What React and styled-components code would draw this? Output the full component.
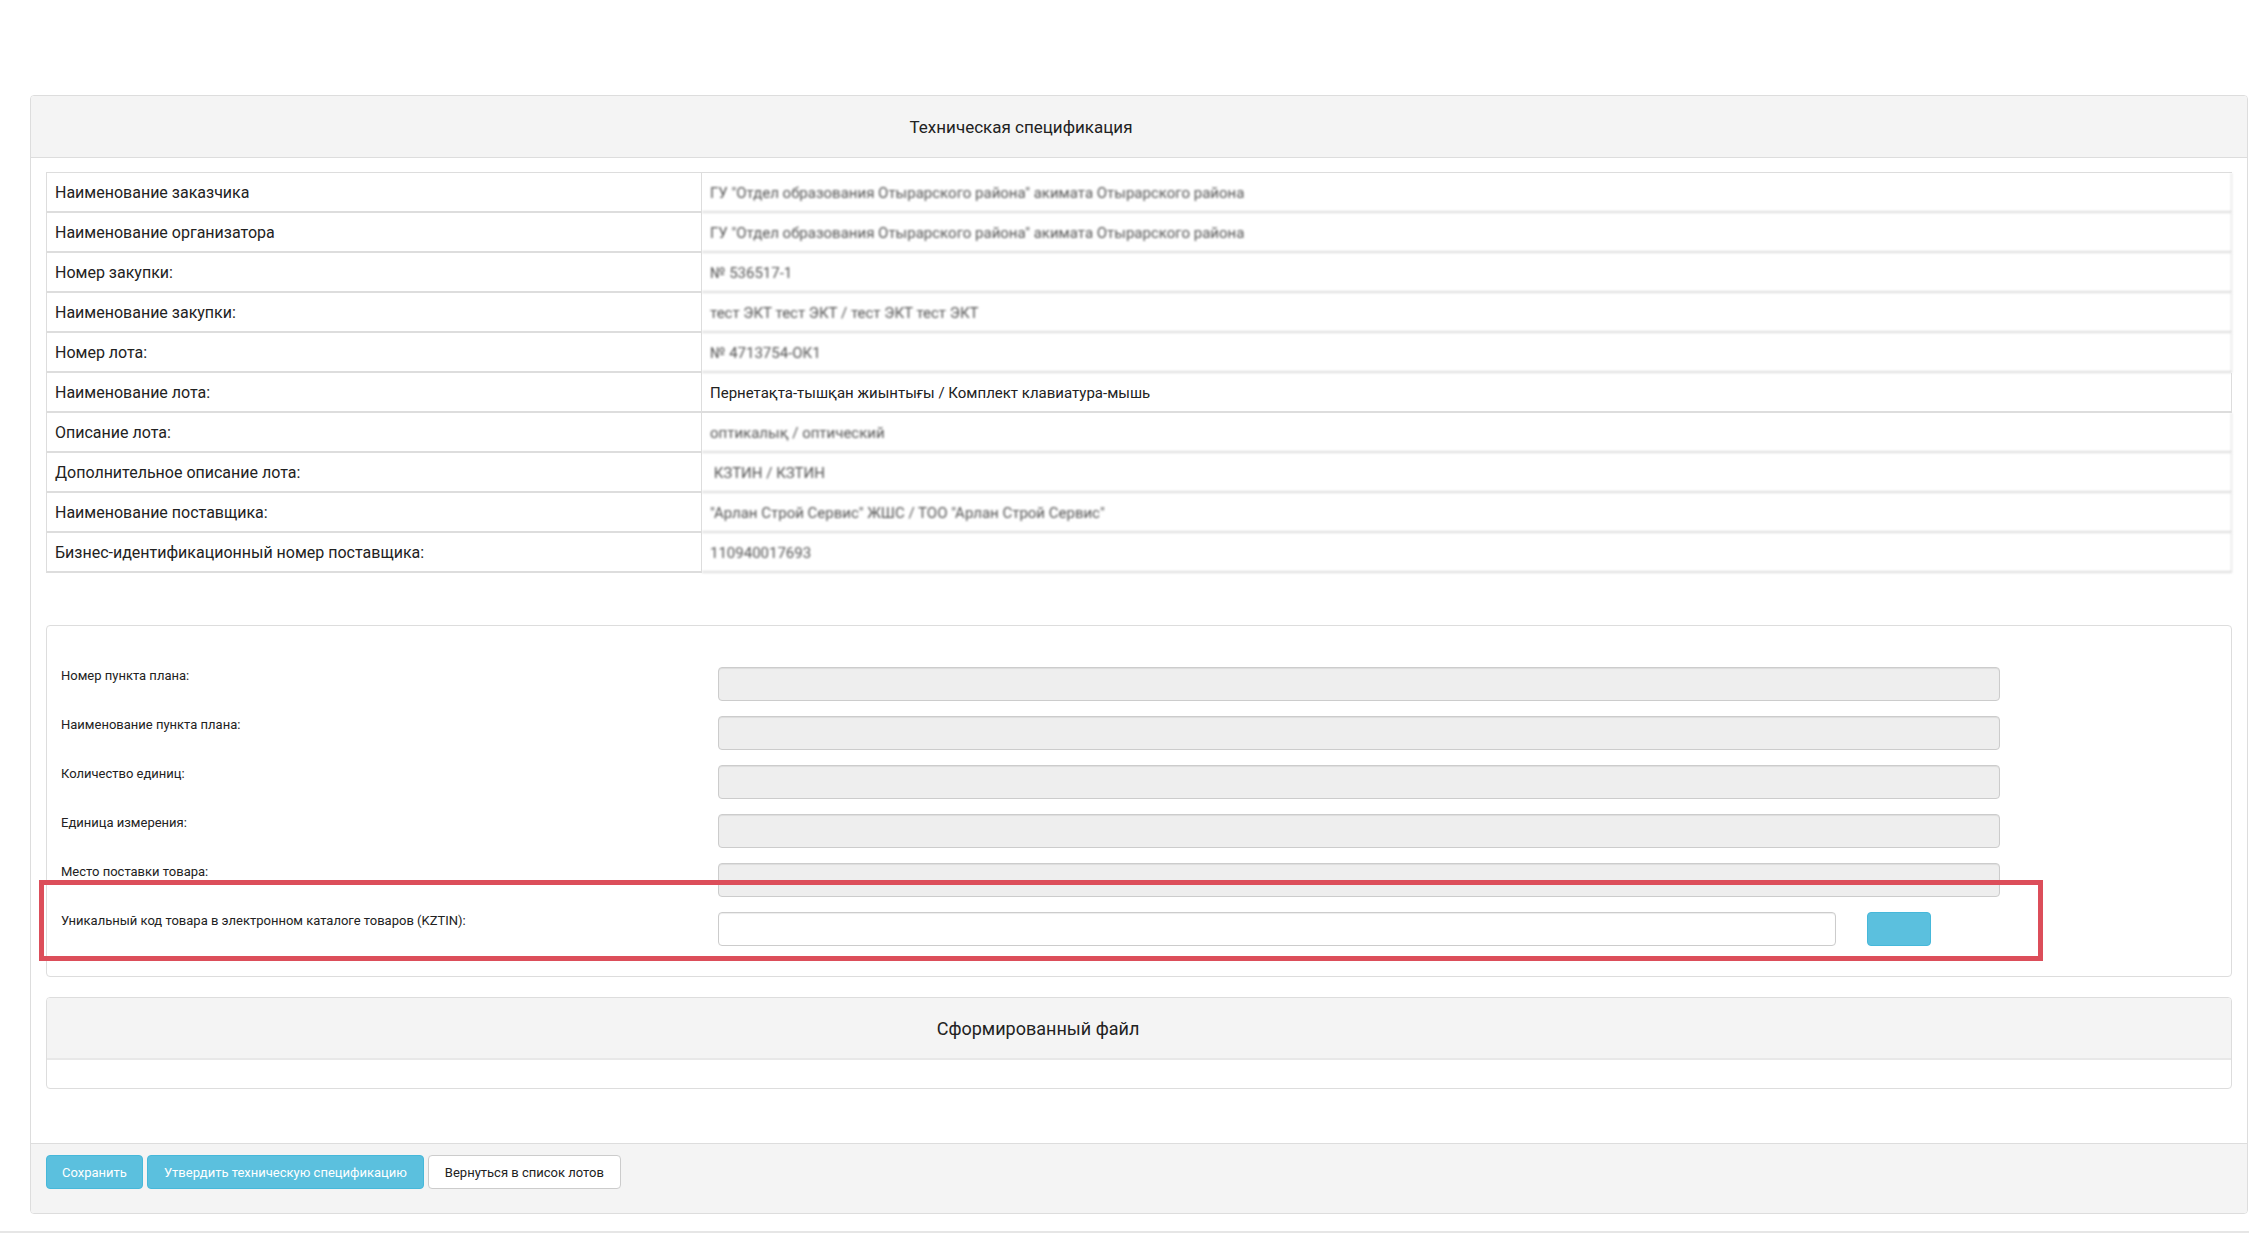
import React from 'react'
import styled, { createGlobalStyle } from 'styled-components'

const GlobalStyle = createGlobalStyle`
    * {
        box-sizing: border-box;
    }

    html, body {
        margin: 0;
        padding: 0;
        background: #fff;
    }

    body {
        font-family: Roboto, "Liberation Sans", Arial, sans-serif;
        color: #333;
    }
`

const Page = styled.div`
    padding: 95px 1px 0 30px;
`

const Panel = styled.section`
    border: 1px solid #ddd;
    border-radius: 4px;
    background: #fff;
`

const PanelHeading = styled.div`
    height: ${props => props.height}px;
    padding-right: ${props => props.shift}px;

    display: flex;
    align-items: center;
    justify-content: center;

    font-size: ${props => props.size}px;
    color: #222;
    background-color: #f4f4f4;
    border-bottom: ${props => props.line}px solid ${props => (props.line > 1 ? '#e8e8e8' : '#ddd')};
    border-radius: 3px 3px 0 0;
`

const PanelBody = styled.div`
    padding: 14px 15px 54px;
`

const InfoTable = styled.table`
    width: 100%;
    table-layout: fixed;
    border-collapse: separate;
    border-spacing: 0;
    border-top: 1px solid #ddd;
    border-left: 1px solid #ddd;

    font-size: 16px;
    line-height: 18px;
`

const Cell = styled.td`
    padding: 11px 8px 9px;
    height: 40px;
    border-right: 1px solid #ddd;
    border-bottom: 2px solid #ddd;
    white-space: pre;
    overflow: hidden;

    font-size: ${props => (props.value ? 15 : 16)}px;
    color: ${props => (props.blurred ? '#555' : '#222')};
    filter: ${props => (props.blurred ? 'blur(0.9px)' : 'none')};
`

const FormPanel = styled.div`
    margin-top: 52px;
    padding: 41px 14px 15px;
    border: 1px solid #ddd;
    border-radius: 4px;
`

const FormRow = styled.div`
    position: relative;
    margin-bottom: 15px;

    display: grid;
    grid-template-columns: 657px 1282px;
    align-items: start;
`

const FormLabel = styled.label`
    font-size: 13px;
    line-height: 18px;
    color: #222;
`

const Field = styled.div`
    height: 34px;
    width: ${props => props.width || '100%'};
    border: 1px solid #ccc;
    border-radius: 4px;
    background-color: ${props => (props.disabled ? '#eee' : '#fff')};
    box-shadow: inset 0 1px 1px rgba(0, 0, 0, 0.075);
`

const FieldGroup = styled.div`
    display: flex;
    align-items: flex-start;
    gap: 31px;
`

const SearchButton = styled.button`
    width: 64px;
    height: 34px;
    border: 1px solid #46b8da;
    border-radius: 4px;
    background-color: #5bc0de;
`

const Highlight = styled.div`
    position: absolute;
    left: -22px;
    top: -32px;
    width: 2004px;
    height: 81px;
    border: 5px solid #dc4e5a;
    pointer-events: none;
`

const FilePanel = styled.div`
    margin-top: 20px;
    border: 1px solid #ddd;
    border-radius: 4px;
`

const FileBody = styled.div`
    height: 28px;
`

const PanelFooter = styled.div`
    padding: 11px 15px 24px;
    border-top: 1px solid #ddd;
    background-color: #f4f4f4;
    border-radius: 0 0 3px 3px;

    display: flex;
    gap: 4px;
`

const Button = styled.button`
    height: 34px;
    padding: 0 ${props => props.pad || 16}px;

    font-family: inherit;
    font-size: 13px;
    color: ${props => (props.info ? '#fff' : '#222')};
    background-color: ${props => (props.info ? '#5bc0de' : '#fff')};
    border: 1px solid ${props => (props.info ? '#46b8da' : '#ccc')};
    border-radius: 4px;
    cursor: pointer;
`

const Rule = styled.hr`
    margin: 17px 0 0;
    border: none;
    border-top: 2px solid #e6e6e6;
`

const info = [
    ['Наименование заказчика', 'ГУ "Отдел образования Отырарского района" акимата Отырарского района', true],
    ['Наименование организатора', 'ГУ "Отдел образования Отырарского района" акимата Отырарского района', true],
    ['Номер закупки:', '№ 536517-1', true],
    ['Наименование закупки:', 'тест ЭКТ тест ЭКТ / тест ЭКТ тест ЭКТ', true],
    ['Номер лота:', '№ 4713754-ОК1', true],
    ['Наименование лота:', 'Пернетақта-тышқан жиынтығы / Комплект клавиатура-мышь', false],
    ['Описание лота:', 'оптикалық / оптический', true],
    ['Дополнительное описание лота:', ' КЗТИН / КЗТИН', true],
    ['Наименование поставщика:', '"Арлан Строй Сервис" ЖШС / ТОО "Арлан Строй Сервис"', true],
    ['Бизнес-идентификационный номер поставщика:', '110940017693', true],
]

const planFields = [
    'Номер пункта плана:',
    'Наименование пункта плана:',
    'Количество единиц:',
    'Единица измерения:',
    'Место поставки товара:',
]

export default function App() {
    return (
        <>
            <GlobalStyle />
            <Page>
                <Panel>
                    <PanelHeading height={62} size={17} shift={236} line={1}>
                        Техническая спецификация
                    </PanelHeading>
                    <PanelBody>
                        <InfoTable>
                            <colgroup>
                                <col style={{ width: '655px' }} />
                                <col />
                            </colgroup>
                            <tbody>
                                {info.map(([label, value, blurred]) => (
                                    <tr key={label}>
                                        <Cell>{label}</Cell>
                                        <Cell value blurred={blurred}>{value}</Cell>
                                    </tr>
                                ))}
                            </tbody>
                        </InfoTable>

                        <FormPanel>
                            {planFields.map(label => (
                                <FormRow key={label}>
                                    <FormLabel>{label}</FormLabel>
                                    <Field disabled />
                                </FormRow>
                            ))}
                            <FormRow>
                                <FormLabel>Уникальный код товара в электронном каталоге товаров (KZTIN):</FormLabel>
                                <FieldGroup>
                                    <Field width="1118px" />
                                    <SearchButton type="button" />
                                </FieldGroup>
                                <Highlight />
                            </FormRow>
                        </FormPanel>

                        <FilePanel>
                            <PanelHeading height={62} size={18} shift={202} line={2}>
                                Сформированный файл
                            </PanelHeading>
                            <FileBody />
                        </FilePanel>
                    </PanelBody>
                    <PanelFooter>
                        <Button info pad={15}>Сохранить</Button>
                        <Button info>Утвердить техническую спецификацию</Button>
                        <Button>Вернуться в список лотов</Button>
                    </PanelFooter>
                </Panel>
            </Page>
            <Rule />
        </>
    )
}
